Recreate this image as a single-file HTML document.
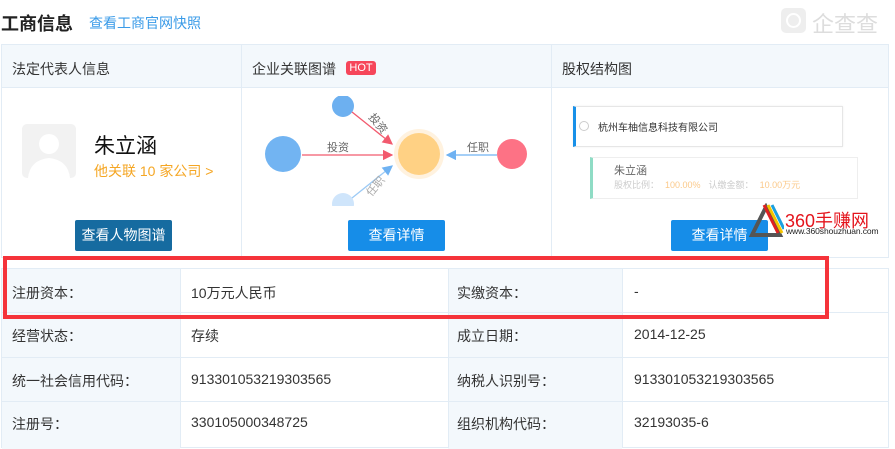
<!DOCTYPE html>
<html><head><meta charset="utf-8"><style>
*{margin:0;padding:0;box-sizing:border-box}
body{width:895px;height:441px;overflow:hidden;background:#fff;font-family:"Liberation Sans","Noto Sans CJK SC",sans-serif;position:relative;color:#333}
.a{position:absolute}
.btn{position:absolute;color:#fff;font-size:14px;text-align:center;line-height:31px;border-radius:2px;width:97px;height:31px;top:220px}
.td{position:absolute;font-size:14px;color:#333}
</style></head><body>
<div class="a" style="left:1px;top:10px;font-size:18px;font-weight:bold;color:#222">工商信息</div>
<div class="a" style="left:89px;top:13px;font-size:14px;color:#3a9be8">查看工商官网快照</div>
<div class="a" style="left:781px;top:8px;width:25px;height:25px;border-radius:5px;background:#eee"></div>
<div class="a" style="left:786px;top:13px;width:15px;height:15px;border:2px solid #fff;border-radius:50%"></div>
<div class="a" style="left:812px;top:7px;font-size:22px;color:#ddd">企查查</div>

<!-- cards -->
<div class="a" style="left:1px;top:44px;width:888px;height:214px;border:1px solid #e2ecf5"></div>
<div class="a" style="left:2px;top:45px;width:886px;height:43px;background:#f3f8fc;border-bottom:1px solid #e2ecf5"></div>
<div class="a" style="left:241px;top:45px;width:1px;height:213px;background:#e2ecf5"></div>
<div class="a" style="left:551px;top:45px;width:1px;height:213px;background:#e2ecf5"></div>
<div class="a" style="left:12px;top:59px;font-size:14px">法定代表人信息</div>
<div class="a" style="left:252px;top:59px;font-size:14px">企业关联图谱</div>
<div class="a" style="left:346px;top:61px;width:30px;height:14px;background:#f6465a;color:#fff;font-size:11px;line-height:14px;text-align:center;border-radius:3px">HOT</div>
<div class="a" style="left:562px;top:59px;font-size:14px">股权结构图</div>

<div class="a" style="left:22px;top:124px;width:54px;height:54px;background:#f2f2f2;border-radius:5px;overflow:hidden">
<svg width="54" height="54"><circle cx="27" cy="20" r="10" fill="#fff"/><path d="M6 54 Q8 36 27 34 Q46 36 48 54Z" fill="#fff"/></svg></div>
<div class="a" style="left:94px;top:130px;font-size:21px;color:#111">朱立涵</div>
<div class="a" style="left:94px;top:161px;font-size:14px;color:#f5a623">他关联 10 家公司 &gt;</div>
<div class="btn" style="left:75px;background:#166ba0">查看人物图谱</div>

<svg class="a" style="left:242px;top:96px" width="308" height="110">
<defs><marker id="m" markerWidth="8" markerHeight="8" refX="7" refY="4" orient="auto"><path d="M0 0L8 4L0 8Z" fill="#f25a6e"/></marker>
<marker id="b" markerWidth="8" markerHeight="8" refX="7" refY="4" orient="auto"><path d="M0 0L8 4L0 8Z" fill="#6fb2f2"/></marker></defs>
<circle cx="101" cy="10" r="11" fill="#6db0f0"/>
<circle cx="41" cy="58" r="18" fill="#72b4f2"/>
<circle cx="101" cy="108" r="11" fill="#cfe5fb"/>
<circle cx="177" cy="58" r="25" fill="#fff2df"/>
<circle cx="177" cy="58" r="21" fill="#ffd184"/>
<circle cx="270" cy="58" r="15" fill="#fd7285"/>
<line x1="110" y1="16" x2="150" y2="48" stroke="#f25a6e" stroke-width="1.3" marker-end="url(#m)"/>
<line x1="60" y1="59" x2="150" y2="59" stroke="#f25a6e" stroke-width="1.3" marker-end="url(#m)"/>
<line x1="110" y1="102" x2="150" y2="70" stroke="#9ccaf5" stroke-width="1.3" marker-end="url(#b)"/>
<line x1="255" y1="59" x2="205" y2="59" stroke="#6fb2f2" stroke-width="1.3" marker-end="url(#b)"/>
<text x="85" y="55" font-size="11" fill="#666">投资</text>
<text x="225" y="55" font-size="11" fill="#666">任职</text>
<text x="124" y="26" font-size="11" fill="#666" transform="rotate(50 130 26)">投资</text>
<text x="124" y="98" font-size="11" fill="#aaa" transform="rotate(-50 130 94)">任职</text>
</svg>
<div class="btn" style="left:348px;background:#168de8">查看详情</div>

<div class="a" style="left:573px;top:106px;width:270px;height:41px;border:1px solid #e6e6e6;border-left:3px solid #1890e8;box-shadow:0 0 2px #eee"></div>
<div class="a" style="left:579px;top:121px;width:10px;height:10px;border:1px solid #ccc;border-radius:50%"></div>
<div class="a" style="left:598px;top:119px;font-size:10px;color:#333">杭州车柚信息科技有限公司</div>
<div class="a" style="left:590px;top:157px;width:268px;height:42px;border:1px solid #eee;border-left:3px solid #8fdcc5"></div>
<div class="a" style="left:614px;top:162px;font-size:11px;color:#666">朱立涵</div>
<div class="a" style="left:614px;top:178px;font-size:9px;color:#ccc;white-space:nowrap">股权比例：<span style="color:#fbc98a;margin-left:6px">100.00%</span><span style="margin-left:8px">认缴金额：</span><span style="color:#fbc98a;margin-left:6px">10.00万元</span></div>
<div class="btn" style="left:671px;background:#168de8">查看详情</div>
<svg class="a" style="left:748px;top:203px" width="36" height="34"><path d="M4 32L18 4L32 32Z" fill="none" stroke="#555" stroke-width="4"/><path d="M16 2L30 30" stroke="#e02020" stroke-width="3"/><path d="M20 2L34 30" stroke="#f5c400" stroke-width="3"/><path d="M24 2L36 26" stroke="#1aa0e0" stroke-width="3"/></svg>
<div class="a" style="left:785px;top:207px;font-size:18px;color:#e4141c;white-space:nowrap">360手赚网</div>
<div class="a" style="left:786px;top:226px;font-size:8.5px;color:#222;letter-spacing:-0.1px;white-space:nowrap">www.360shouzhuan.com</div>

<!-- table -->
<div class="a" style="left:1px;top:268px;width:888px;height:180px;border:1px solid #e2ecf5"></div>
<div class="a" style="left:2px;top:269px;width:178px;height:180px;background:#f3f8fc"></div>
<div class="a" style="left:448px;top:269px;width:174px;height:180px;background:#f3f8fc"></div>
<div class="a" style="left:180px;top:268px;width:1px;height:180px;background:#e2ecf5"></div>
<div class="a" style="left:448px;top:268px;width:1px;height:180px;background:#e2ecf5"></div>
<div class="a" style="left:622px;top:268px;width:1px;height:180px;background:#e2ecf5"></div>
<div class="a" style="left:1px;top:312px;width:888px;height:1px;background:#e2ecf5"></div>
<div class="a" style="left:1px;top:357px;width:888px;height:1px;background:#e2ecf5"></div>
<div class="a" style="left:1px;top:401px;width:888px;height:1px;background:#e2ecf5"></div>

<div class="td" style="left:12px;top:283px">注册资本：</div><div class="td" style="left:191px;top:283px">10万元人民币</div>
<div class="td" style="left:457px;top:283px">实缴资本：</div><div class="td" style="left:634px;top:283px">-</div>
<div class="td" style="left:12px;top:326px">经营状态：</div><div class="td" style="left:191px;top:326px">存续</div>
<div class="td" style="left:457px;top:326px">成立日期：</div><div class="td" style="left:634px;top:326px">2014-12-25</div>
<div class="td" style="left:12px;top:371px">统一社会信用代码：</div><div class="td" style="left:191px;top:371px">913301053219303565</div>
<div class="td" style="left:457px;top:371px">纳税人识别号：</div><div class="td" style="left:634px;top:371px">913301053219303565</div>
<div class="td" style="left:12px;top:414px">注册号：</div><div class="td" style="left:191px;top:414px">330105000348725</div>
<div class="td" style="left:457px;top:414px">组织机构代码：</div><div class="td" style="left:634px;top:414px">32193035-6</div>

<div class="a" style="left:3px;top:256px;width:826px;height:63px;border:4px solid #f5333a"></div>
</body></html>
